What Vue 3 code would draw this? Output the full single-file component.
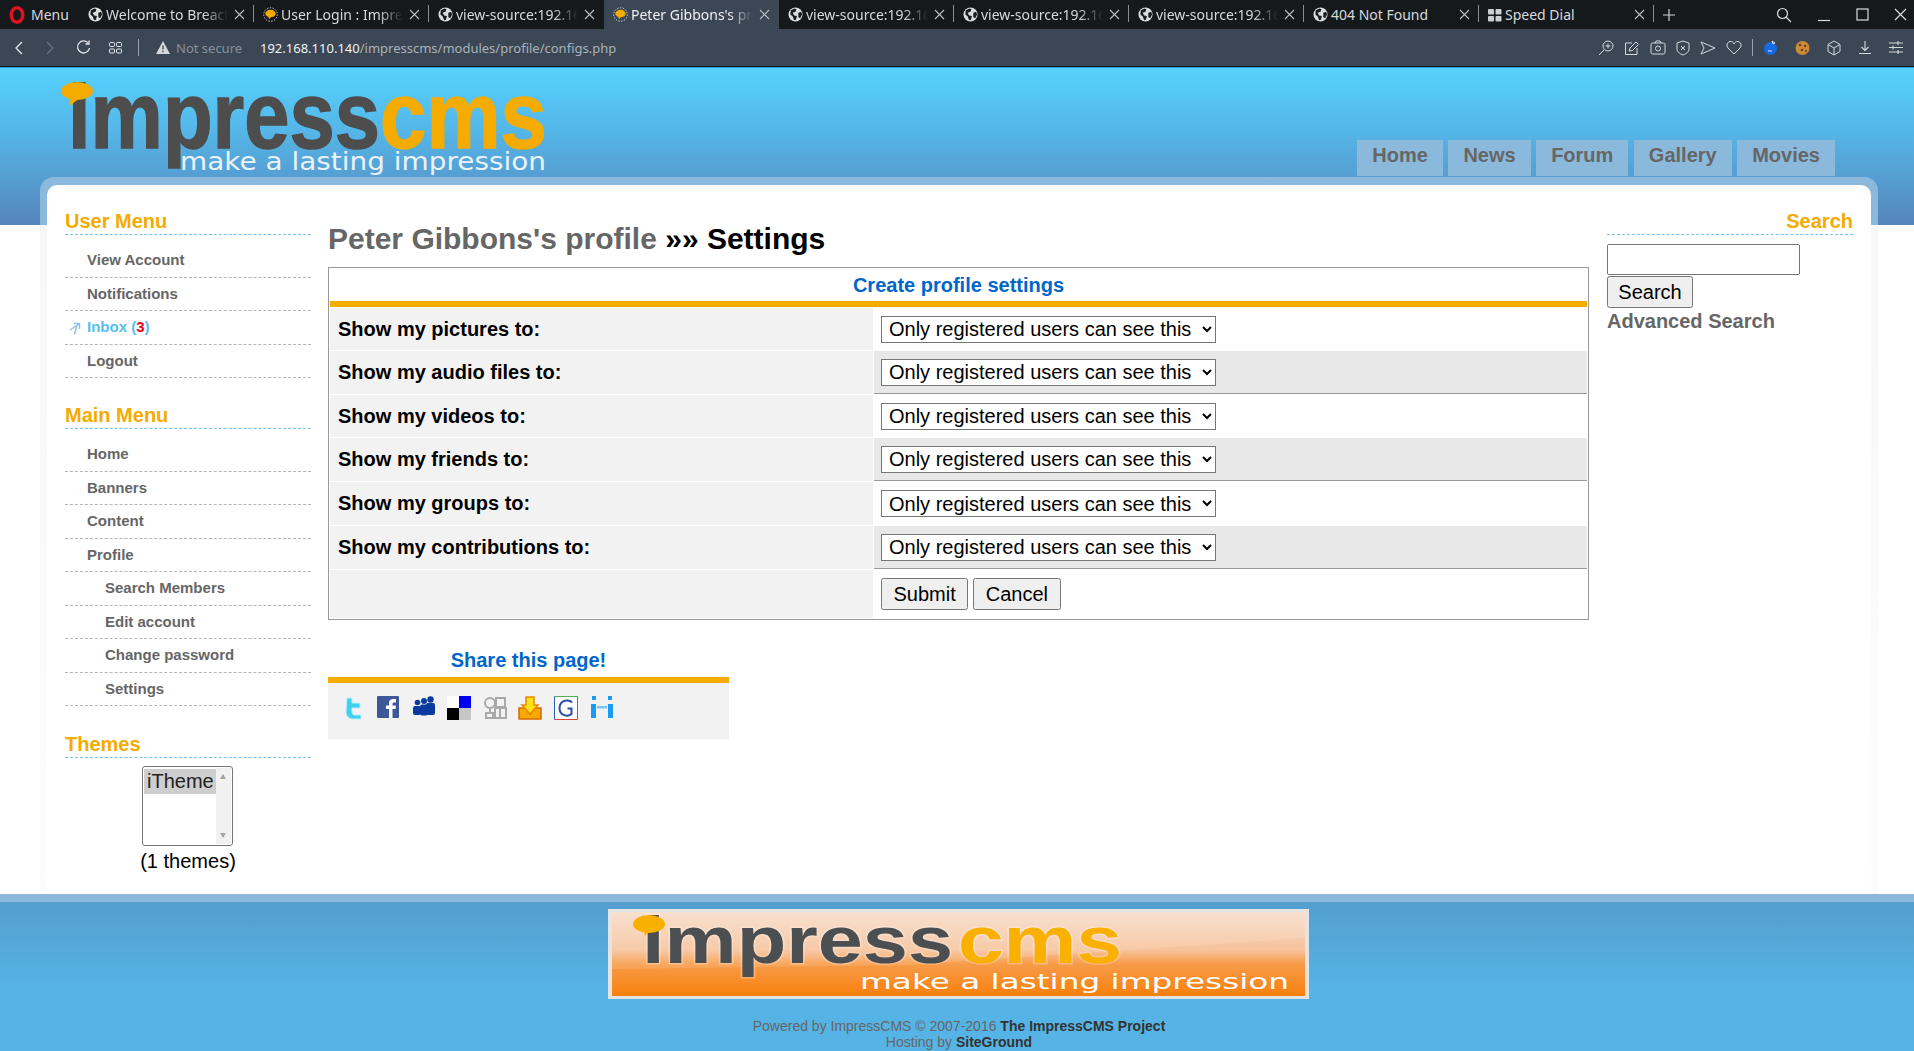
<script setup>
const tabs = [
  { title: 'Welcome to Breach', icon: 'globe' },
  { title: 'User Login : ImpressCMS', icon: 'bubble' },
  { title: 'view-source:192.168.110.140', icon: 'globe', noSep: true },
  { title: "Peter Gibbons's profile", icon: 'bubble', active: true, noSep: true },
  { title: 'view-source:192.168.110.140', icon: 'globe' },
  { title: 'view-source:192.168.110.140', icon: 'globe' },
  { title: 'view-source:192.168.110.140', icon: 'globe' },
  { title: '404 Not Found', icon: 'globe', plain: true },
  { title: 'Speed Dial', icon: 'grid', plain: true }
]

const navLinks = ['Home', 'News', 'Forum', 'Gallery', 'Movies']

const mainMenu = [
  { label: 'Home' },
  { label: 'Banners' },
  { label: 'Content' },
  { label: 'Profile' },
  { label: 'Search Members', sub: true },
  { label: 'Edit account', sub: true },
  { label: 'Change password', sub: true },
  { label: 'Settings', sub: true }
]

const settings = [
  'Show my pictures to:',
  'Show my audio files to:',
  'Show my videos to:',
  'Show my friends to:',
  'Show my groups to:',
  'Show my contributions to:'
]
</script>

<template>
  <div class="app">
    <div class="tabbar">
      <div class="menu-btn">
        <svg width="16" height="18" viewBox="0 0 16 18"><ellipse cx="8" cy="9" rx="5.8" ry="7.2" fill="none" stroke="#e0121d" stroke-width="3.4" /></svg>
        <span>Menu</span>
      </div>
      <div v-for="(tab, i) in tabs" :key="i" class="tab" :class="{ active: tab.active, 'no-sep': tab.noSep }">
        <svg v-if="tab.icon === 'globe'" class="fav" width="15" height="15" viewBox="0 0 16 16">
          <circle cx="8" cy="8" r="7.5" fill="#dcdcdc" />
          <path d="M3 3.5l4-2 2 1-1 2.5-3 1 1.5 3 3 .5-1 4-2 .5-1.5-4L2.500 8zM11 6l3-1 1 3-2 4-2-1z" fill="#1a1d20" />
        </svg>
        <svg v-else-if="tab.icon === 'bubble'" class="fav" width="15" height="15" viewBox="0 0 16 16">
          <circle cx="8" cy="8" r="7.200" fill="none" stroke="#ddd" stroke-width="1" stroke-dasharray="1.500 1.500" />
          <ellipse cx="8" cy="7" rx="5.500" ry="4" fill="#f5ab00" />
          <path d="M5.500 10l1 3 2-2.500z" fill="#f5ab00" />
        </svg>
        <svg v-else class="fav" width="14" height="14" viewBox="0 0 14 14" fill="#cfcfcf">
          <rect x="0" y="1" width="6" height="5.500" rx="1" /><rect x="7.500" y="1" width="6" height="5.500" rx="1" />
          <rect x="0" y="8" width="6" height="5.500" rx="1" /><rect x="7.500" y="8" width="6" height="5.500" rx="1" />
        </svg>
        <span class="tab-title" :class="{ plain: tab.plain }">{{ tab.title }}</span>
        <svg class="tab-x" width="11" height="11" viewBox="0 0 11 11"><path d="M1 1l9 9M10 1l-9 9" stroke="#b9bec3" stroke-width="1.100" /></svg>
      </div>
      <svg class="plus" width="12" height="12" viewBox="0 0 12 12"><path d="M6 0v12M0 6h12" stroke="#d0d4d8" stroke-width="1.200" /></svg>
      <div class="win-btns">
        <svg width="16" height="16" viewBox="0 0 16 16" fill="none" stroke="#d8dcdf" stroke-width="1.200"><circle cx="6.500" cy="6.500" r="5" /><path d="M10 10l5 5" /></svg>
        <svg width="14" height="14" viewBox="0 0 14 14" stroke="#d8dcdf" stroke-width="1.200"><path d="M1 12.500h12" /></svg>
        <svg width="13" height="13" viewBox="0 0 13 13" fill="none" stroke="#d8dcdf" stroke-width="1.200"><rect x="1" y="1" width="11" height="11" /></svg>
        <svg width="13" height="13" viewBox="0 0 13 13" stroke="#d8dcdf" stroke-width="1.200"><path d="M1 1l11 11M12 1L1 12" /></svg>
      </div>
    </div>

    <div class="addressbar">
      <div class="nav-btns">
        <svg width="10" height="16" viewBox="0 0 10 16" fill="none" stroke="#e4e7ea" stroke-width="1.400"><path d="M8 2L2 8l6 6" /></svg>
        <svg width="10" height="16" viewBox="0 0 10 16" fill="none" stroke="#67727d" stroke-width="1.400"><path d="M2 2l6 6-6 6" /></svg>
        <svg width="15" height="15" viewBox="0 0 15 15" fill="none" stroke="#e4e7ea" stroke-width="1.300"><path d="M12.500 3.500A6 6 0 1 0 13.500 8" /><path d="M13 .5v3.500H9.500" /></svg>
        <svg class="dial" width="13" height="12" viewBox="0 0 13 12" fill="none" stroke="#e4e7ea" stroke-width="1"><rect x=".5" y=".5" width="5" height="4" rx="1" /><rect x="7.500" y=".5" width="5" height="4" rx="1" /><rect x=".5" y="7" width="5" height="4" rx="1" /><rect x="7.500" y="7" width="5" height="4" rx="1" /></svg>
      </div>
      <i class="sep"></i>
      <svg class="warn" width="14" height="13" viewBox="0 0 14 13"><path d="M7 0l7 13H0z" fill="#d5d8db" /><path d="M7 4.500v4M7 9.800v1.400" stroke="#3b4754" stroke-width="1.300" /></svg>
      <span class="not-secure">Not secure</span>
      <span class="url"><b>192.168.110.140</b>/impresscms/modules/profile/configs.php</span>
      <div class="tools">
        <svg width="16" height="16" viewBox="0 0 16 16" fill="none" stroke="#d5d8db" stroke-width="1"><circle cx="10" cy="6" r="5" /><path d="M6 10l-5 5M10 3.500v5M7.500 6h5" /></svg>
        <svg width="16" height="16" viewBox="0 0 16 16" fill="none" stroke="#d5d8db" stroke-width="1"><path d="M8 3H1.500v11.500H13V8" /><path d="M5 11l1-3 6-6 2.500 2.500-6 6z" /></svg>
        <svg width="16" height="15" viewBox="0 0 16 15" fill="none" stroke="#d5d8db" stroke-width="1"><rect x="1" y="3" width="14" height="11" rx="1.500" /><circle cx="8" cy="8.500" r="2.500" /><path d="M5 3l1-2h4l1 2" /></svg>
        <svg width="14" height="16" viewBox="0 0 14 16" fill="none" stroke="#d5d8db" stroke-width="1"><path d="M7 1l6 2v6c0 3-3 5-6 6-3-1-6-3-6-6V3z" /><path d="M5 6l4 4M9 6l-4 4" /></svg>
        <svg width="16" height="14" viewBox="0 0 16 14" fill="none" stroke="#d5d8db" stroke-width="1"><path d="M1 1l14 6-14 6 3-6z" /></svg>
        <svg width="16" height="15" viewBox="0 0 16 15" fill="none" stroke="#d5d8db" stroke-width="1"><path d="M8 14L2 8C0 5.500 1 2 4 1.500 6 1.200 7.500 2.500 8 4c.5-1.500 2-2.800 4-2.500 3 .5 4 4 2 6.500z" /></svg>
        <i class="sep"></i>
        <svg class="ext1" width="15" height="16" viewBox="0 0 15 16"><circle cx="7.500" cy="8.500" r="6.500" fill="#1668e3" /><path d="M9 1l3 2-2 1zM5 11h4" stroke="#cfe0ff" fill="#1668e3" /></svg>
        <svg class="ext2" width="15" height="16" viewBox="0 0 15 16"><circle cx="7.500" cy="8" r="7" fill="#c98a3a" /><circle cx="5" cy="5" r="1.200" fill="#6b3d12" /><circle cx="10" cy="6" r="1.200" fill="#6b3d12" /><circle cx="7" cy="10" r="1.200" fill="#6b3d12" /><circle cx="11" cy="11" r="1" fill="#6b3d12" /></svg>
        <svg class="ext3" width="14" height="16" viewBox="0 0 14 16" fill="none" stroke="#d5d8db" stroke-width="1"><path d="M7 1l6 3.500v7L7 15l-6-3.500v-7zM1 4.500L7 8l6-3.500M7 8v7" /></svg>
        <svg class="ext4" width="14" height="15" viewBox="0 0 14 15" fill="none" stroke="#d5d8db" stroke-width="1.100"><path d="M7 1v9M3.500 7L7 10.500 10.500 7M1 13.500h12" /></svg>
        <svg class="ext5" width="14" height="13" viewBox="0 0 14 13" stroke="#d5d8db" stroke-width="1.100"><path d="M0 2h14M0 6.500h14M0 11h14" /><path d="M9 0v4M4 4.500v4M9 9v4" /></svg>
      </div>
    </div>

    <div class="page">
      <header class="site-head">
        <svg class="logo" width="490" height="96" viewBox="0 0 490 96">
          <text x="8" y="66" class="logo-word" fill="#4d4d4d" stroke="#4d4d4d" textLength="312" lengthAdjust="spacingAndGlyphs">impress</text>
          <text x="320" y="66" class="logo-word" fill="#f5ab00" stroke="#f5ab00" textLength="167" lengthAdjust="spacingAndGlyphs">cms</text>
          <text x="120" y="88" class="logo-tag" fill="#e9f2f8" textLength="366" lengthAdjust="spacingAndGlyphs">make a lasting impression</text>
          <ellipse cx="17" cy="9" rx="16" ry="9" fill="#f5ab00" />
          <path d="M10 15l-.5 9 9-7z" fill="#f5ab00" />
        </svg>
        <nav class="site-nav">
          <a v-for="link in navLinks" :key="link">{{ link }}</a>
        </nav>
      </header>

      <div class="card">
        <div class="card-inner">
          <aside class="left">
            <h3 class="block-title">User Menu</h3>
            <ul class="menu">
              <li>View Account</li>
              <li>Notifications</li>
              <li class="inbox">
                <svg class="inbox-ico" width="12" height="13" viewBox="0 0 12 13" fill="none" stroke="#8fc4ea" stroke-width="1.500"><path d="M1 8l9-6M5 1.500h5.500V7M8 3L5.500 12.500" /></svg>
                Inbox (<b>3</b>)
              </li>
              <li>Logout</li>
            </ul>

            <h3 class="block-title next">Main Menu</h3>
            <ul class="menu">
              <li v-for="item in mainMenu" :key="item.label" :class="{ sub: item.sub }">{{ item.label }}</li>
            </ul>

            <h3 class="block-title next themes-title">Themes</h3>
            <div class="themes">
              <div class="theme-list">
                <div class="theme-opts"><div class="theme-opt">iTheme</div></div>
                <div class="theme-scroll"><i class="up"></i><i class="down"></i></div>
              </div>
              <div class="theme-count">(1 themes)</div>
            </div>
          </aside>

          <main class="middle">
            <h1 class="page-title"><span>Peter Gibbons's profile</span> »» Settings</h1>
            <table class="form-table">
              <colgroup>
                <col class="col-head" />
                <col />
              </colgroup>
              <thead>
                <tr><th colspan="2">Create profile settings</th></tr>
              </thead>
              <tbody>
                <tr v-for="(label, i) in settings" :key="label" :class="i % 2 ? 'even' : 'odd'">
                  <td class="head">{{ label }}</td>
                  <td class="field">
                    <select>
                      <option>Only registered users can see this</option>
                      <option>Everyone can see this</option>
                      <option>Only friends can see this</option>
                      <option>Only I can see this</option>
                    </select>
                  </td>
                </tr>
                <tr class="foot">
                  <td class="head"></td>
                  <td class="field">
                    <button type="button">Submit</button>
                    <button type="button">Cancel</button>
                  </td>
                </tr>
              </tbody>
            </table>

            <section class="share">
              <h4>Share this page!</h4>
              <div class="share-icons">
                <svg width="20" height="24" viewBox="0 0 20 24"><path d="M4 2h5v5h8v5H9v4c0 2 1 3 3 3h6v4h-8C6 23 3 20 3 16z" fill="#3fd0f2" stroke="#b9eefa" stroke-width="1" /></svg>
                <svg width="22" height="22" viewBox="0 0 22 22"><rect width="22" height="22" rx="1" fill="#3b5998" /><path d="M12 22v-9H9v-3.500h3V7c0-3 2-4 4-4h3v3.500h-2c-1 0-1.500.5-1.500 1.500v1.500H19l-.5 3.500h-3v9z" fill="#fff" /></svg>
                <svg width="22" height="20" viewBox="0 0 22 20" fill="#0b3a9e"><circle cx="17.500" cy="3.500" r="3.200" /><circle cx="11" cy="5" r="3" /><circle cx="4.500" cy="6.500" r="2.800" /><rect x="13" y="7" width="9" height="12" rx="2" /><rect x="7" y="8.500" width="8" height="11" rx="2" /><rect x="0" y="10" width="8" height="9" rx="2" /></svg>
                <svg width="24" height="24" viewBox="0 0 24 24"><rect width="12" height="12" fill="#fff" /><rect x="12" width="12" height="12" fill="#0000f0" /><rect y="12" width="12" height="12" fill="#000" /><rect x="12" y="12" width="12" height="12" fill="#c6c6c6" /></svg>
                <svg width="24" height="24" viewBox="0 0 24 24" fill="#f2f2f2" stroke="#a9a9a9" stroke-width="2"><circle cx="7" cy="7" r="5" /><path d="M7 12v5" /><rect x="3" y="17" width="7" height="5" /><rect x="13" y="2" width="9" height="9" /><rect x="12" y="12" width="11" height="10" /><path d="M17 12v10" /></svg>
                <svg width="24" height="24" viewBox="0 0 24 24"><path d="M1 12h6l5 6 5-6h6v11H1z" fill="#f6a900" stroke="#d96a00" stroke-width="1.500" /><path d="M8 1h8v8h4l-8 9-8-9h4z" fill="#ffe11a" stroke="#e88a00" stroke-width="1.500" /></svg>
                <svg width="24" height="24" viewBox="0 0 24 24"><rect x=".5" y=".5" width="23" height="23" fill="#fff" /><path d="M.5 23.500V.5h23" fill="none" stroke="#2e5fb5" /><path d="M.5 .5h23" fill="none" stroke="#4fae4f" /><path d="M23.500 .5v23H.5" fill="none" stroke="#d9453a" /><path d="M18 6.500C15.500 3.500 6 3 5.500 12c0 8 8.500 9 12 6v-5.500h-4" fill="none" stroke="#2b4ea8" stroke-width="2" /></svg>
                <svg width="24" height="22" viewBox="0 0 24 22" fill="#1a9cf5"><rect x="1" y="8" width="5" height="14" /><rect x="2" y="0" width="4" height="4" /><rect x="18" y="8" width="5" height="14" /><rect x="18" y="0" width="4" height="4" /><rect x="7" y="10" width="10" height="2.500" fill="#7cc5f7" /></svg>
              </div>
            </section>
          </main>

          <aside class="right">
            <h3 class="block-title align-right">Search</h3>
            <input class="search-input" type="text" />
            <button class="search-btn" type="button">Search</button>
            <a class="adv-search">Advanced Search</a>
          </aside>
        </div>
      </div>

      <footer class="site-foot">
        <svg class="foot-logo" width="701" height="90" viewBox="0 0 701 90">
          <defs>
            <linearGradient id="orange" x1="0" y1="0" x2="0" y2="1">
              <stop offset="0" stop-color="#f7dcc9" />
              <stop offset=".45" stop-color="#f6c39c" />
              <stop offset=".62" stop-color="#f79b48" />
              <stop offset="1" stop-color="#f9800d" />
            </linearGradient>
          </defs>
          <rect width="701" height="90" fill="#e4e4e4" />
          <rect x="4" y="3" width="693" height="84" fill="url(#orange)" />
          <path d="M4 3h693v26L520 41 300 56 4 60z" fill="#fff" opacity=".12" />
          <text x="34" y="54" class="foot-word" fill="#4c4f52" textLength="311" lengthAdjust="spacingAndGlyphs">impress</text>
          <text x="350" y="54" class="foot-word" fill="#f9b000" textLength="164" lengthAdjust="spacingAndGlyphs">cms</text>
          <text x="252" y="80" class="foot-tag" fill="#fff" textLength="429" lengthAdjust="spacingAndGlyphs">make a lasting impression</text>
          <ellipse cx="41" cy="15" rx="16" ry="9" fill="#f9b000" />
          <path d="M36 20l1 7 6-6z" fill="#f9b000" />
        </svg>
        <p class="foot-text">Powered by ImpressCMS © 2007-2016 <b>The ImpressCMS Project</b><br />Hosting by <b>SiteGround</b></p>
      </footer>
    </div>
  </div>
</template>

<style scoped>
.app {
  height: 1051px;
  display: flex;
  flex-direction: column;
  font-family: "Liberation Sans", Arial, sans-serif;
  overflow: hidden;
}

/* browser chrome */
.tabbar {
  height: 29px;
  background: #16191c;
  display: flex;
  align-items: center;
  color: #d6d9dc;
  font: 14px "Noto Sans", sans-serif;
  flex: none;
}

.menu-btn {
  width: 79px;
  padding-left: 9px;
  box-sizing: border-box;
  display: flex;
  align-items: center;
  gap: 6px;
}

.tab {
  width: 175px;
  height: 29px;
  box-sizing: border-box;
  padding-left: 9px;
  display: flex;
  align-items: center;
  position: relative;
}

.tab::after {
  content: "";
  position: absolute;
  right: 0;
  top: 5px;
  width: 1px;
  height: 17px;
  background: #8b8f93;
}

.tab.no-sep::after {
  display: none;
}

.tab.active {
  background: #3b4754;
  color: #eef0f2;
}

.fav {
  flex: none;
  margin-right: 3px;
}

.tab-title {
  width: 122px;
  overflow: hidden;
  white-space: nowrap;
  -webkit-mask-image: linear-gradient(to right, #000 80%, transparent 100%);
  mask-image: linear-gradient(to right, #000 80%, transparent 100%);
}

.tab-title.plain {
  -webkit-mask-image: none;
  mask-image: none;
}

.tab-x {
  position: absolute;
  right: 9px;
  top: 9px;
}

.plus {
  margin-left: 9px;
}

.win-btns {
  margin-left: auto;
  display: flex;
  align-items: center;
  gap: 25px;
  padding-right: 7px;
}

.addressbar {
  height: 38px;
  background: #3b4754;
  border-bottom: 1px solid #16191c;
  box-sizing: border-box;
  display: flex;
  align-items: center;
  font: 13px "Noto Sans", sans-serif;
  flex: none;
}

.nav-btns {
  display: flex;
  align-items: center;
  gap: 21px;
  padding-left: 14px;
}

.dial {
  margin-left: -3px;
}

.sep {
  width: 1px;
  height: 17px;
  background: #9aa2aa;
  display: block;
}

.addressbar > .sep {
  margin-left: 16px;
}

.warn {
  margin-left: 17px;
}

.not-secure {
  margin-left: 6px;
  width: 84px;
  color: #87919b;
}

.url {
  color: #a9b2ba;
  white-space: nowrap;
}

.url b {
  font-weight: 400;
  color: #f0f2f4;
}

.tools {
  margin-left: auto;
  padding-right: 11px;
  display: flex;
  align-items: center;
  gap: 10px;
}

.ext2 { margin-left: 7px; }
.ext3 { margin-left: 7px; }
.ext4 { margin-left: 7px; }
.ext5 { margin-left: 7px; }

/* page */
.page {
  flex: 1;
  min-height: 0;
  display: flex;
  flex-direction: column;
  background: linear-gradient(#55d2ff, #55b6e8 40%, #5585bb) top / 100% 157px no-repeat #fff;
  border-top: 1px solid #2a9fd0;
}

.site-head {
  height: 109px;
  flex: none;
  display: flex;
  justify-content: space-between;
  padding-left: 60px;
  padding-right: 79px;
}

.logo {
  margin-top: 14px;
}

.logo-word {
  font: bold 94px "Liberation Sans", sans-serif;
  stroke-width: 1.500px;
}

.logo-tag {
  font: 25px "DejaVu Sans", sans-serif;
}

.site-nav {
  display: flex;
  align-self: flex-end;
  gap: 5.500px;
  margin-bottom: 1px;
}

.site-nav a {
  height: 36px;
  padding: 0 15px;
  background: #8ab9dc;
  color: #666;
  font-size: 20px;
  font-weight: 700;
  line-height: 30px;
}

.card {
  flex: 1;
  min-height: 0;
  margin: 0 36px 0 40px;
  padding: 8px 7px 0;
  border-radius: 14px 14px 0 0;
  background: linear-gradient(#8ab9dc 0, #8ab9dc 48px, #f7f7f7 48px, #fdfdfd 100%);
}

.card-inner {
  height: 100%;
  box-sizing: border-box;
  background: #fff;
  border-radius: 10px 10px 0 0;
  padding: 24px 18px 0;
  display: grid;
  grid-template-columns: 246px 1261px 247px;
  column-gap: 17px;
}

.block-title {
  margin: 0;
  height: 26px;
  box-sizing: border-box;
  border-bottom: 1px dashed #7cc0ee;
  font-size: 20px;
  line-height: 24px;
  font-weight: 700;
  color: #f5ab00;
}

.block-title.next {
  margin-top: 25px;
}

.block-title.themes-title {
  margin-top: 26px;
}

.block-title.align-right {
  text-align: right;
}

.menu {
  list-style: none;
  margin: 9px 0 0;
  padding: 0;
}

.menu li {
  position: relative;
  height: 33.500px;
  box-sizing: border-box;
  border-bottom: 1px dashed #b5b5b5;
  padding-left: 22px;
  font-size: 15px;
  font-weight: 700;
  line-height: 32px;
  color: #666;
}

.menu li.sub {
  padding-left: 40px;
}

.menu li.inbox {
  color: #55bfef;
}

.inbox b {
  color: #f00018;
}

.inbox-ico {
  position: absolute;
  left: 4px;
  top: 11px;
}

.themes {
  text-align: center;
  font-size: 20px;
  color: #000;
}

.theme-list {
  width: 91px;
  height: 80px;
  margin: 8px 0 0 77px;
  box-sizing: border-box;
  border: 1px solid #767676;
  border-radius: 3px;
  padding: 1px;
  display: flex;
}

.theme-opts {
  flex: 1;
  padding-top: 1px;
  min-width: 0;
}

.theme-opt {
  background: #cecece;
  height: 25px;
  line-height: 24px;
  text-align: left;
  padding-left: 3px;
  color: #222;
}

.theme-scroll {
  width: 15px;
  background: #f1f1f1;
  position: relative;
}

.theme-scroll i {
  position: absolute;
  left: 4px;
  width: 0;
  height: 0;
  border-left: 3.500px solid transparent;
  border-right: 3.500px solid transparent;
}

.theme-scroll .up {
  top: 6px;
  border-bottom: 5px solid #a3a3a3;
}

.theme-scroll .down {
  bottom: 6px;
  border-top: 5px solid #a3a3a3;
}

.theme-count {
  margin-top: 3px;
  line-height: 24px;
}

.page-title {
  margin: 13px 0 11px;
  font-size: 30px;
  line-height: 34px;
  font-weight: 700;
  color: #000;
}

.page-title span {
  color: #666;
}

.form-table {
  width: 100%;
  table-layout: fixed;
  border: 1px solid #999;
  border-spacing: 1px;
  font-size: 20px;
}

.col-head {
  width: 543px;
}

.form-table th {
  height: 38px;
  padding: 0;
  box-sizing: border-box;
  border-bottom: 6px solid #f5ab00;
  color: #0066cc;
  font-weight: 700;
  line-height: 24px;
}

.form-table td {
  padding: 0 0 0 8px;
}

.form-table td.head {
  background: #f2f2f2;
  font-weight: 700;
  color: #000;
}

.form-table td.field {
  padding-left: 7px;
}

tr.odd td {
  height: 42px;
}

tr.even td {
  height: 42px;
}

tbody tr:nth-child(5) td {
  height: 43px;
}

tr.even td.field {
  background: #e8e8e8;
  border-bottom: 1px solid #999;
}

tr.foot td {
  height: 48px;
}

.form-table select {
  display: block;
  width: 335px;
  height: 27px;
  padding-left: 3px;
  font: 20px "Liberation Sans", sans-serif;
  color: #000;
  background: #fff;
}

.form-table button {
  height: 32px;
  font: 20px "Liberation Sans", sans-serif;
  padding: 0 10.500px;
  margin-right: 5px;
  color: #000;
}

.share {
  width: 401px;
  margin-top: 21px;
}

.share h4 {
  margin: 0;
  height: 36px;
  box-sizing: border-box;
  padding-top: 5px;
  text-align: center;
  font-size: 20px;
  line-height: 28px;
  font-weight: 700;
  color: #0066cc;
}

.share-icons {
  height: 62px;
  box-sizing: border-box;
  border-top: 6px solid #f5ab00;
  background: #f2f2f2;
  padding: 13px 0 0 12.500px;
  display: grid;
  grid-auto-flow: column;
  grid-auto-columns: 24px;
  column-gap: 11.600px;
  justify-content: start;
  justify-items: center;
  align-items: start;
}

.right {
  padding-left: 1px;
}

.search-input {
  display: block;
  width: 193px;
  height: 31px;
  box-sizing: border-box;
  margin-top: 9px;
}

.search-btn {
  display: block;
  width: 86px;
  height: 32px;
  margin-top: 1px;
  padding: 0;
  font: 20px "Liberation Sans", sans-serif;
  color: #000;
}

.adv-search {
  display: block;
  margin-top: 0;
  font-size: 20px;
  font-weight: 700;
  line-height: 26px;
  color: #666;
}

.site-foot {
  height: 157px;
  flex: none;
  box-sizing: border-box;
  border-top: 8px solid #8ab9dc;
  background: linear-gradient(#559ed0, #55b4e5 60%);
  text-align: center;
  padding-top: 7px;
}

.foot-logo {
  display: block;
  margin: 0 auto 0 608px;
}

.foot-word {
  font: bold 66px "Liberation Sans", sans-serif;
  paint-order: stroke;
  stroke: #fff;
  stroke-opacity: .25;
  stroke-width: 3px;
}

.foot-tag {
  font: 22px "DejaVu Sans", sans-serif;
}

.foot-text {
  margin: 19px 0 0 4px;
  font-size: 14px;
  line-height: 16px;
  color: #666;
}

.foot-text b {
  color: #333;
}
</style>

<style>
html, body {
  margin: 0;
  overflow: hidden;
}
</style>
